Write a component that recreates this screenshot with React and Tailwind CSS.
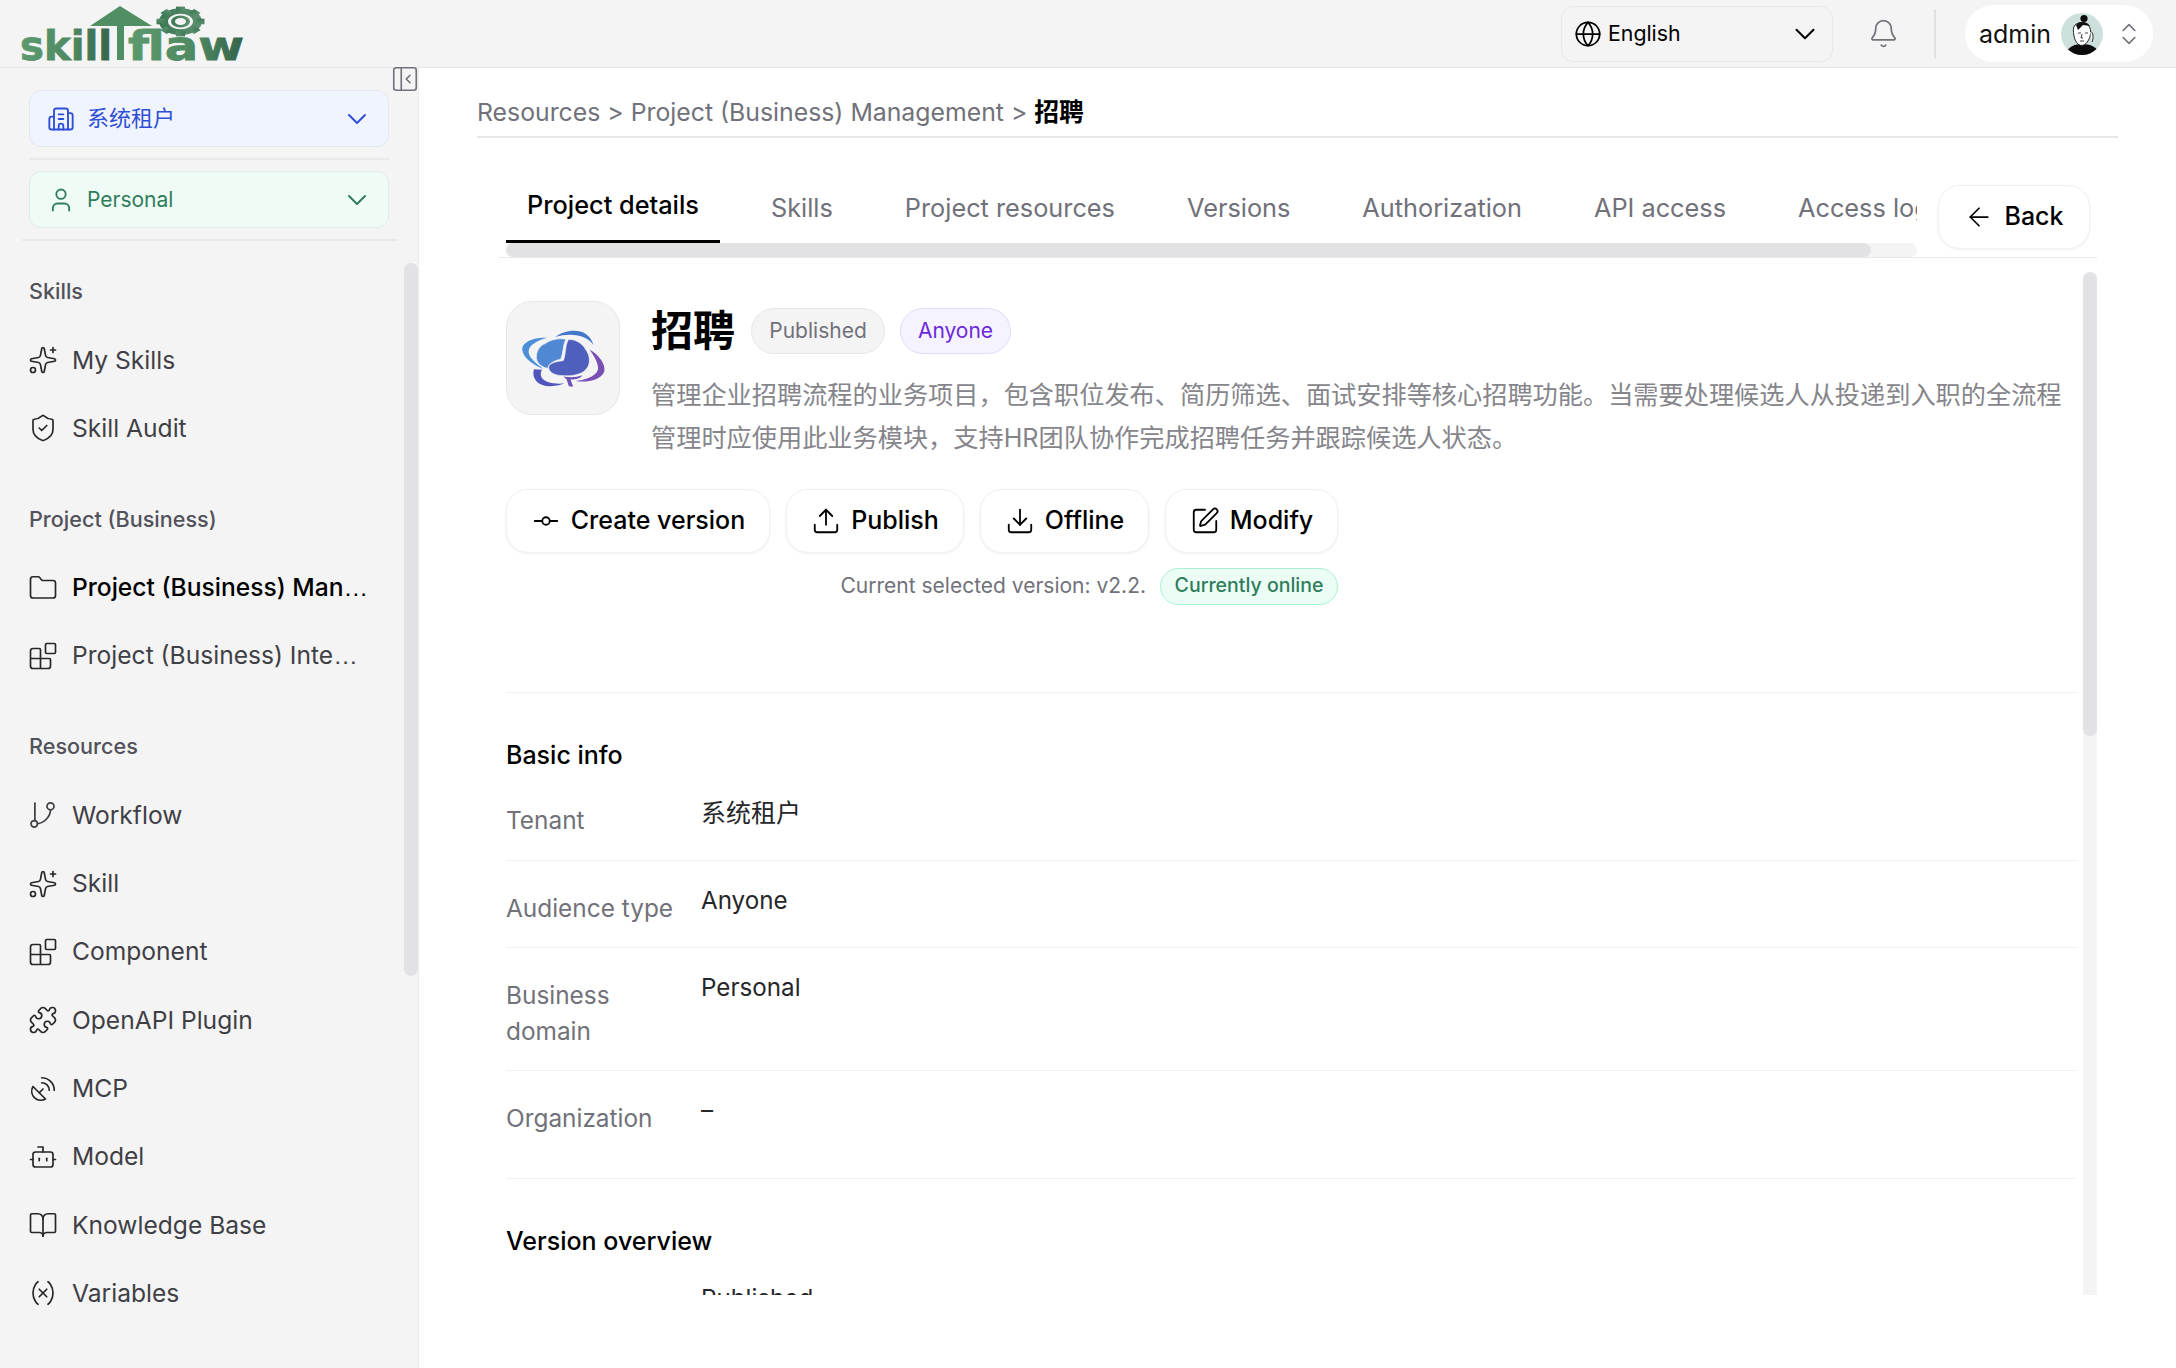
import {
  ArrowLeft,
  Bell,
  Blocks,
  BookOpen,
  Bot,
  Building2,
  ChevronDown,
  ChevronsUpDown,
  Download,
  Folder,
  GitCommitHorizontal,
  Globe,
  PanelLeftClose,
  Puzzle,
  SatelliteDish,
  ShieldCheck,
  Sparkles,
  SquarePen,
  Upload,
  User,
  Variable,
} from "lucide-react";

function WorkflowIcon({ size = 30 }) {
  return (
    <svg width={size} height={size} viewBox="0 0 24 24" fill="none" stroke="currentColor" strokeWidth="1.4" strokeLinecap="round">
      <path d="M5.5 2.5V16.5" />
      <circle cx="5" cy="19" r="2.6" />
      <circle cx="18" cy="5" r="2.8" />
      <path d="M18 7.8C18 13 13.5 18 7.6 19" />
    </svg>
  );
}

function Logo() {
  return (
    <svg width="260" height="67" viewBox="0 0 260 67" className="shrink-0">
      <defs>
        <linearGradient id="logoGreen" x1="0" x2="1" y1="0" y2="0">
          <stop offset="0" stopColor="#5c9a6e" />
          <stop offset="0.55" stopColor="#4f8a62" />
          <stop offset="1" stopColor="#35634a" />
        </linearGradient>
        <linearGradient id="logoGear" x1="0" x2="1" y1="0" y2="0">
          <stop offset="0" stopColor="#3f7a57" />
          <stop offset="1" stopColor="#5b8f6e" />
        </linearGradient>
      </defs>
      <path d="M120 6 L152 26 L124 26 L124 60 L117 60 L117 26 L90 26 Z" fill="#4f8f63" />
      <g transform="translate(180.5 21.5) scale(1 0.62)" fill="url(#logoGear)">
        <circle r="17" fill="none" stroke="url(#logoGear)" strokeWidth="9" />
        {[0, 45, 90, 135, 180, 225, 270, 315].map((a) => (
          <rect key={a} x="-4.5" y="-24" width="9" height="8" transform={`rotate(${a})`} />
        ))}
        <circle r="7.5" fill="none" stroke="url(#logoGear)" strokeWidth="4" />
      </g>
      <g fontFamily="'DejaVu Sans', sans-serif" fontWeight="700" fontSize="40" fill="url(#logoGreen)" stroke="url(#logoGreen)" strokeWidth="0.8">
        <text x="20" y="60" textLength="92" lengthAdjust="spacingAndGlyphs">skill</text>
        <text x="128" y="60" textLength="116" lengthAdjust="spacingAndGlyphs">flaw</text>
      </g>
    </svg>
  );
}

function Avatar() {
  return (
    <svg width="42" height="42" viewBox="0 0 42 42" className="shrink-0">
      <defs>
        <clipPath id="avatarClip">
          <circle cx="21" cy="21" r="21" />
        </clipPath>
      </defs>
      <g clipPath="url(#avatarClip)">
        <rect width="42" height="42" fill="#cde0dc" />
        <path d="M4 42C6 34 14 31 21 31C29 31 37 34 39 42Z" fill="#0c0c0c" />
        <path d="M14 12C18 8 27 9 29 15C31 21 28 29 23 32C18 34 14 29 13 23C12 18 12 14 14 12Z" fill="#fff" stroke="#111" strokeWidth="0.9" />
        <path d="M15 12C18 8 26 8 29 13L22 12L17 17Z" fill="#111" />
        <circle cx="23" cy="5.5" r="3.6" fill="#0c0c0c" />
        <path d="M29 18C32 19 33 24 31 29" fill="#fff" stroke="#111" strokeWidth="0.9" />
        <path d="M17 20h3M24 20h3M21 21l-1 4h2M19 28h4" fill="none" stroke="#111" strokeWidth="0.8" />
      </g>
    </svg>
  );
}

function BrainLogo() {
  return (
    <svg width="114" height="114" viewBox="18 33 342 342">
      <path d="M140 142C100 140 62 155 65 180C68 205 100 225 130 238C110 222 78 200 85 178C90 160 115 150 140 142Z" fill="#4a8fd8" />
      <path d="M165 140C200 112 270 110 282 165C265 135 215 125 165 140Z" fill="#4578c8" />
      <path d="M270 178C300 195 320 225 315 245C305 272 260 280 228 274C265 270 298 255 296 232C294 215 282 195 270 178Z" fill="#7a4fb5" />
      <path d="M100 238C93 265 110 290 150 290C170 290 185 285 192 282C160 284 130 280 122 260C120 252 122 245 125 240Z" fill="#4f55bd" />
      <path d="M198 147C178 142 150 148 135 160C118 165 106 185 108 205C110 222 125 232 142 236C145 222 160 212 182 208C190 190 188 165 198 147Z" fill="#5088d4" stroke="#f4f4f5" strokeWidth="2" />
      <path d="M205 148C225 145 250 160 258 178C272 195 275 225 258 240C245 255 215 260 190 258C165 258 145 248 145 232C148 218 170 215 190 212C198 195 195 165 205 148Z" fill="#4f5fbd" stroke="#f4f4f5" strokeWidth="2" />
      <path d="M190 260C205 264 230 264 248 257C240 270 220 270 212 270L220 292L207 290L200 270Z" fill="#6f52b8" />
    </svg>
  );
}

const navGroups = [
  {
    label: "Skills",
    first: true,
    items: [
      { name: "My Skills", icon: Sparkles },
      { name: "Skill Audit", icon: ShieldCheck },
    ],
  },
  {
    label: "Project (Business)",
    items: [
      { name: "Project (Business) Man", icon: Folder, active: true, cut: true },
      { name: "Project (Business) Inte", icon: Blocks, cut: true },
    ],
  },
  {
    label: "Resources",
    items: [
      { name: "Workflow", icon: WorkflowIcon },
      { name: "Skill", icon: Sparkles },
      { name: "Component", icon: Blocks },
      { name: "OpenAPI Plugin", icon: Puzzle },
      { name: "MCP", icon: SatelliteDish },
      { name: "Model", icon: Bot },
      { name: "Knowledge Base", icon: BookOpen },
      { name: "Variables", icon: Variable },
    ],
  },
];

const tabs = ["Project details", "Skills", "Project resources", "Versions", "Authorization", "API access", "Access logs"];

function Sidebar() {
  return (
    <aside className="relative flex w-[419px] shrink-0 flex-col border-r border-[#ebebeb] bg-[#f4f4f4]">
      <button className="absolute -right-[2px] -top-[4px] text-[#71717a]">
        <PanelLeftClose size={30} strokeWidth={1.3} />
      </button>
      <div className="absolute right-0 top-[195px] h-[713px] w-[14px] rounded-full bg-[#e2e2e4]" />

      <div className="px-[29px] pt-[22px]">
        <div className="flex h-[57px] w-[360px] items-center rounded-[12px] border border-[#e4e7ee] bg-[#f0f4fe] pl-[17px] pr-[15px] text-[#2f4fd6]">
          <Building2 size={28} strokeWidth={1.6} />
          <span className="ml-[12px] flex-1 text-[22px]">系统租户</span>
          <ChevronDown size={32} strokeWidth={1.5} />
        </div>
        <div className="mt-[11px] h-[2px] w-[360px] bg-[#e9e9e9]" />
        <div className="mt-[11px] flex h-[57px] w-[360px] items-center rounded-[12px] border border-[#e3ebe7] bg-[#effcf6] pl-[17px] pr-[15px] text-[#2f7d5b]">
          <User size={28} strokeWidth={1.6} />
          <span className="ml-[12px] flex-1 text-[21px]">Personal</span>
          <ChevronDown size={32} strokeWidth={1.5} />
        </div>
      </div>
      <div className="mx-[22px] mt-[11px] h-[2px] w-[375px] bg-[#e9e9e9]" />

      <nav className="px-[29px]">
        {navGroups.map((group) => (
          <div key={group.label}>
            <div className={`${group.first ? "mt-[32px]" : "mt-[38px]"} mb-[17px] h-[36px] text-[21.6px] font-medium leading-[36px] text-[#52525b]`}>
              {group.label}
            </div>
            {group.items.map((item) => (
              <a key={item.name} href="#" className={`-ml-[1px] flex h-[68.3px] items-center gap-[14px] ${item.active ? "font-medium text-black" : "text-[#3f3f46]"}`}>
                <item.icon size={30} strokeWidth={1.35} className="shrink-0 text-[#27272a]" />
                <span className="whitespace-nowrap text-[24.6px]">
                  {item.name}
                  {item.cut && <span className="font-['Liberation_Sans',sans-serif] font-normal">…</span>}
                </span>
              </a>
            ))}
          </div>
        ))}
      </nav>
    </aside>
  );
}

function Row({ label, value, last, bottom }) {
  return (
    <div className={`grid grid-cols-[195px_1fr] text-[24.4px] leading-[36px] ${last ? "" : "border-b border-[#f1f1f2]"}`}>
      <div className={`pt-[29px] ${bottom} text-[#71717a]`}>{label}</div>
      <div className="pt-[22.5px] text-[24.2px] text-[#27272a]">{value}</div>
    </div>
  );
}

function ActionButton({ icon: Icon, children, className }) {
  return (
    <button className={`flex h-[64px] items-center justify-center gap-[10px] rounded-[22px] border border-[#f0f0f0] bg-white text-[25px] font-medium text-black shadow-[0_1px_3px_rgba(0,0,0,0.06)] ${className}`}>
      <Icon size={30} strokeWidth={1.45} />
      {children}
    </button>
  );
}

export default function App() {
  return (
    <div className="flex h-[1368px] w-[2176px] flex-col overflow-hidden bg-white font-[Inter,'Noto_Sans_CJK_SC',sans-serif]">
      <header className="flex h-[68px] shrink-0 items-center border-b border-[#e5e5e5] bg-[#f4f4f4]">
        <Logo />
        <div className="ml-auto flex items-center">
          <div className="flex h-[56px] w-[272px] items-center rounded-[12px] border border-[#e8e8e8] pl-[11.5px] pr-[10.5px] text-black">
            <Globe size={28} strokeWidth={1.5} />
            <span className="ml-[6.5px] flex-1 text-[21.3px]">English</span>
            <ChevronDown size={34} strokeWidth={1.4} />
          </div>
          <Bell size={31} strokeWidth={1.35} className="ml-[35px] text-[#71717a]" />
          <div className="ml-[35px] h-[50px] w-[2px] bg-[#e2e2e2]" />
          <div className="ml-[29px] mr-[23px] flex h-[57px] w-[188px] items-center rounded-full bg-white pl-[14px]">
            <span className="pt-[2px] text-[25px] text-[#111]">admin</span>
            <span className="ml-[10px]"><Avatar /></span>
            <ChevronsUpDown size={28} strokeWidth={1.4} className="ml-[12px] text-[#71717a]" />
          </div>
        </div>
      </header>

      <div className="flex min-h-0 flex-1">
        <Sidebar />

        <main className="min-w-0 flex-1">
          <div className="mx-[58px] flex h-[70px] items-center border-b-2 border-[#e8e8e8] pt-[22px] text-[24.8px] text-[#71717a]">
            <span>Resources</span>
            <span className="mx-[7px]">&gt;</span>
            <span>Project (Business) Management</span>
            <span className="mx-[7px]">&gt;</span>
            <span className="font-semibold text-black">招聘</span>
          </div>

          <div className="ml-[80px] mr-[79px] flex items-start border-b border-[#e8e8e8] pt-[33px]">
            <div className="ml-[7px] w-[1411px] shrink-0 overflow-hidden">
              <div className="flex gap-[30px]">
                {tabs.map((tab, i) => (
                  <div
                    key={tab}
                    className={`flex h-[72px] shrink-0 items-center whitespace-nowrap px-[21px] text-[25.3px] ${
                      i === 0 ? "border-b-[3px] border-black pb-[2px] font-medium text-black" : "pt-[2px] text-[#71717a]"
                    }`}
                  >
                    {tab}
                  </div>
                ))}
              </div>
              <div className="h-[14px] rounded-full bg-[#f4f4f5]">
                <div className="h-[14px] w-[1365px] rounded-full bg-[#e2e2e4]" />
              </div>
            </div>
            <button className="ml-[21px] mt-[14px] flex h-[64px] w-[152px] items-center justify-center gap-[10px] rounded-[22px] border border-[#f0f0f0] bg-white text-[25px] font-medium text-black shadow-[0_1px_3px_rgba(0,0,0,0.06)]">
              <ArrowLeft size={30} strokeWidth={1.4} />
              Back
            </button>
          </div>

          <div className="ml-[80px] mr-[79px] flex h-[1037px] overflow-hidden">
            <div className="ml-[7px] mr-[7px] min-w-0 flex-1">
              <div className="flex gap-[31px] pt-[43px]">
                <div className="flex h-[114px] w-[114px] shrink-0 items-center justify-center rounded-[26px] border border-[#e7e7e9] bg-[#f4f4f5]">
                  <BrainLogo />
                </div>
                <div className="min-w-0 flex-1">
                  <div className="mt-[7px] flex h-[46px] items-center">
                    <h1 className="text-[42px] font-bold leading-[46px] text-black">招聘</h1>
                    <span className="ml-[16px] flex h-[46px] w-[134px] items-center justify-center rounded-full border border-[#e5e7eb] bg-[#f4f4f5] text-[21px] text-[#71717a]">Published</span>
                    <span className="ml-[15px] flex h-[46px] w-[111px] items-center justify-center rounded-full border border-[#e0daf9] bg-[#f5f3ff] text-[21px] text-[#6d28d9]">Anyone</span>
                  </div>
                  <p className="mt-[20px] text-[25.2px] leading-[43px] text-[#85858b]">
                    管理企业招聘流程的业务项目，包含职位发布、简历筛选、面试安排等核心招聘功能。当需要处理候选人从投递到入职的全流程管理时应使用此业务模块，支持HR团队协作完成招聘任务并跟踪候选人状态。
                  </p>
                </div>
              </div>

              <div className="mt-[28.5px] flex w-fit flex-col items-end">
                <div className="flex gap-[16px]">
                  <ActionButton icon={GitCommitHorizontal} className="w-[264px]">Create version</ActionButton>
                  <ActionButton icon={Upload} className="w-[178px]">Publish</ActionButton>
                  <ActionButton icon={Download} className="w-[169px]">Offline</ActionButton>
                  <ActionButton icon={SquarePen} className="w-[173px]">Modify</ActionButton>
                </div>
                <div className="mt-[15px] flex items-center gap-[14px]">
                  <span className="text-[21px] text-[#71717a]">Current selected version: v2.2.</span>
                  <span className="flex h-[37px] w-[178px] items-center justify-center rounded-full border border-[#a7f3d0] bg-[#ecfdf5] text-[19.5px] font-medium text-[#2f7d5b]">Currently online</span>
                </div>
              </div>

              <div className="mt-[87px] border-t border-[#f0f0f1]" />

              <h2 className="mt-[44px] h-[36px] text-[25px] font-medium leading-[36px] text-black">Basic info</h2>
              <Row label="Tenant" value={<span className="text-[25px]">系统租户</span>} bottom="pb-[22px]" />
              <Row label="Audience type" value="Anyone" bottom="pb-[21px]" />
              <Row label={<>Business<br />domain</>} value="Personal" bottom="pb-[21px]" />
              <Row label="Organization" value="–" bottom="pb-[42px]" />

              <h2 className="mt-[44px] h-[36px] text-[25px] font-medium leading-[36px] text-black">Version overview</h2>
              <Row label="Status" value="Published" last bottom="pb-[21px]" />
            </div>
            <div className="mt-[14px] w-[14px] shrink-0 rounded-t-full bg-[#f4f4f5]">
              <div className="h-[464px] rounded-full bg-[#e2e2e4]" />
            </div>
          </div>
        </main>
      </div>
    </div>
  );
}
